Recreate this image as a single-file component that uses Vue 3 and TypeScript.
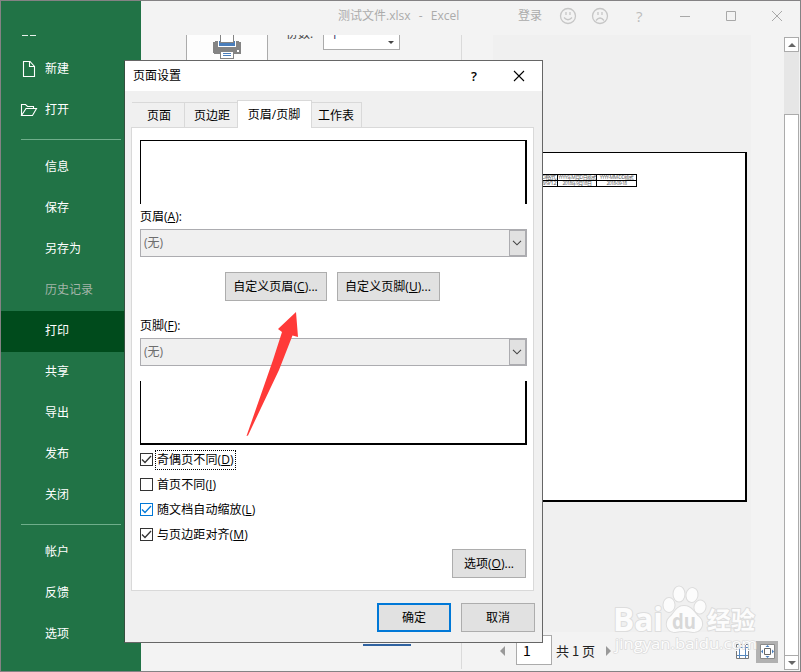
<script setup lang="ts">
import { ref } from 'vue'

interface NavItem { label: string; icon?: 'file' | 'folder'; active?: boolean; disabled?: boolean }
interface Option { label: string; key: string; checked: boolean; hot?: boolean; focus?: boolean }

const navGroups: NavItem[][] = [
  [{ label: '新建', icon: 'file' }, { label: '打开', icon: 'folder' }],
  [
    { label: '信息' },
    { label: '保存' },
    { label: '另存为' },
    { label: '历史记录', disabled: true },
    { label: '打印', active: true },
    { label: '共享' },
    { label: '导出' },
    { label: '发布' },
    { label: '关闭' },
  ],
  [{ label: '帐户' }, { label: '反馈' }, { label: '选项' }],
]

const tabs = ['页面', '页边距', '页眉/页脚', '工作表']
const activeTab = ref(2)

const options = ref<Option[]>([
  { label: '奇偶页不同', key: 'D', checked: true, focus: true },
  { label: '首页不同', key: 'I', checked: false },
  { label: '随文档自动缩放', key: 'L', checked: true, hot: true },
  { label: '与页边距对齐', key: 'M', checked: true },
])
</script>

<template>
  <div class="window">
    <nav class="sidebar">
      <div class="back"><i></i><i></i></div>
      <div v-for="(group, g) in navGroups" :key="g" class="group">
        <div
          v-for="item in group"
          :key="item.label"
          class="nav-item"
          :class="{ active: item.active, disabled: item.disabled }"
        >
          <span class="nav-icon">
            <svg v-if="item.icon === 'file'" width="18" height="18" viewBox="0 0 18 18">
              <path d="M3.500 1.500H10L14.500 6.500V16.500H3.500ZM9.500 1.500V6.500H14.500" />
            </svg>
            <svg v-else-if="item.icon === 'folder'" width="18" height="18" viewBox="0 0 18 18">
              <path d="M1.500 14V3.500H5.500L7.500 5.500H13.500V7M1.500 14.500L6 7.500H16.500L12.500 14.500Z" />
            </svg>
          </span>
          <span>{{ item.label }}</span>
        </div>
      </div>
    </nav>

    <main class="main">
      <header class="titlebar">
        <span class="doc-title">测试文件.xlsx&nbsp; -&nbsp; Excel</span>
        <span class="login">登录</span>
        <svg class="title-icons" width="240" height="20" viewBox="0 0 240 20">
          <g fill="none" stroke="#c6c6c6" stroke-width="1.3">
            <circle cx="18" cy="10" r="7.500" />
            <path d="M14 11.500Q18 16 22 11.500M16 6V9M20 6V9" />
            <circle cx="50" cy="10" r="7.500" />
            <path d="M46 14.500Q50 9.500 54 14.500M48 6V9M52 6V9" />
          </g>
          <g fill="none" stroke="#a8a8a8">
            <path d="M130 10.500H140M176.500 5.500H185.500V14.500H176.500Z" />
            <path d="M222 5L232 15M232 5L222 15" />
          </g>
          <text x="86" y="15.500" font-size="15" fill="#bcbcbc">?</text>
        </svg>
      </header>

      <div class="body">
        <section class="settings">
          <div class="print-row">
            <div class="print-button">
              <svg width="28" height="25" viewBox="0 0 28 25" shape-rendering="crispEdges">
                <path d="M0 7H5V12H23V7H28V18L27 19H1L0 18Z" fill="#848484" />
                <path d="M2 6H5V12H2ZM23 6H26V12H23Z" fill="#848484" />
                <path d="M5 6H23V12H5Z" fill="#fff" />
                <path d="M6 6H22V11H6Z" fill="#4a7ebb" />
                <path d="M7 0V8H21V0" fill="#848484" />
                <path d="M8 0H20V7H8Z" fill="#fff" />
                <path d="M7 16H21V24H7Z" fill="#848484" />
                <path d="M8 17H20V23H8Z" fill="#fff" />
                <path d="M10 18H18V19H10ZM10 20H18V21H10Z" fill="#4a7ebb" />
                <path d="M24 15H26V17H24Z" fill="#fff" />
              </svg>
            </div>
            <div class="copies-label"><span>份数:</span></div>
            <div class="copies-box"><b>1</b><i class="caret"></i></div>
          </div>
          <a class="setup-link">页面设置</a>
        </section>

        <section class="preview">
          <div class="canvas">
            <div class="paper">
              <table class="sheet">
                <tbody>
                  <tr><td class="c1"><span>YYYY/M/D格式</span></td><td class="c2"><span>YYYY年M月D日格式</span></td><td class="c3"><span>YYYY-MM-DD格式</span></td></tr>
                  <tr><td class="c1"><span>2018/9/12</span></td><td class="c2"><span>2018年9月18日</span></td><td class="c3"><span>2018-09-18</span></td></tr>
                </tbody>
              </table>
            </div>
          </div>
          <footer class="pager">
            <i class="tri left"></i>
            <span class="page-box">1</span>
            <span class="page-total">共 1 页</span>
            <i class="tri right"></i>
            <svg class="margins" width="13" height="15" viewBox="0 0 13 15">
              <path d="M.5 .5H12.500V14.500H.5Z" fill="#fff" stroke="#777" />
              <path d="M3.500 1V14M9.500 1V14M1 3.500H12M1 11.500H12" stroke="#5587bd" />
              <path d="M3 .5H4M6 .5H7M9 .5H10M.5 6V7M12.500 6V7" stroke="#fff" />
            </svg>
            <span class="zoom">
              <svg width="15" height="15" viewBox="0 0 15 15">
                <path d="M.5 .5H14.500V14.500H.5Z" fill="#fff" stroke="#8a8a8a" />
                <path d="M4.500 4.500H10.500V10.500H4.500Z" fill="none" stroke="#666" />
                <path d="M7.500 1L9.500 3H5.500ZM7.500 14L9.500 12H5.500ZM1 7.500L3 5.500V9.500ZM14 7.500L12 5.500V9.500Z" fill="#4a7ebb" />
              </svg>
            </span>
          </footer>
        </section>

        <div class="scrollbar">
          <div class="sb-btn"><i class="up"></i></div>
          <div class="track"></div>
          <div class="thumb"></div>
          <div class="sb-btn"><i class="down"></i></div>
        </div>
      </div>
    </main>

    <div class="dialog">
      <div class="dlg-title">
        <span>页面设置</span>
        <b class="help">?</b>
        <svg width="12" height="12" viewBox="0 0 12 12"><path d="M1 1L11 11M11 1L1 11" stroke="#000" stroke-width="1.100" /></svg>
      </div>
      <div class="tabs">
        <div v-for="(t, i) in tabs" :key="t" class="tab" :class="['t' + i, { on: i === activeTab }]" @click="activeTab = i">{{ t }}</div>
      </div>
      <div class="panel">
        <div class="box head"></div>
        <div class="label">页眉(<u>A</u>):</div>
        <div class="select"><span>(无)</span><i><svg width="10" height="6" viewBox="0 0 10 6"><path d="M1 .8L5 4.800L9 .8" /></svg></i></div>
        <div class="customs">
          <button class="btn c">自定义页眉(<u>C</u>)...</button>
          <button class="btn d">自定义页脚(<u>U</u>)...</button>
        </div>
        <div class="label">页脚(<u>F</u>):</div>
        <div class="select"><span>(无)</span><i><svg width="10" height="6" viewBox="0 0 10 6"><path d="M1 .8L5 4.800L9 .8" /></svg></i></div>
        <div class="box foot"></div>
        <div class="checks">
          <div v-for="o in options" :key="o.key" class="check" :class="{ hot: o.hot }" @click="o.checked = !o.checked">
            <span class="tick"><svg v-if="o.checked" width="11" height="11" viewBox="0 0 11 11"><path d="M1 5.500L4 8.500L10 2" /></svg></span>
            <span class="check-text" :class="{ focus: o.focus }">{{ o.label }}(<u>{{ o.key }}</u>)</span>
          </div>
        </div>
        <div class="opt-row"><button class="btn">选项(<u>O</u>)...</button></div>
      </div>
      <div class="actions">
        <button class="btn primary">确定</button>
        <button class="btn">取消</button>
      </div>
    </div>

    <svg class="arrow" width="54" height="126" viewBox="0 0 54 126">
      <path d="M51 0L53 25L47.500 23.500L34 58L3 123.500L1.500 124L28 48L37 20L33 17Z" fill="#ff3a38" />
    </svg>

    <svg class="watermark" width="146" height="76" viewBox="0 0 146 76">
      <g fill="#fff" stroke="#dadada" stroke-width="2" paint-order="stroke" stroke-linejoin="round">
        <ellipse cx="55" cy="24" rx="5.500" ry="7" />
        <ellipse cx="65" cy="13" rx="5.500" ry="7.500" />
        <ellipse cx="78" cy="14" rx="5.500" ry="7" transform="rotate(12 78 14)" />
        <ellipse cx="86" cy="26" rx="5.500" ry="6.500" transform="rotate(15 86 26)" />
        <path d="M70 25C62 25 61 32 56 36C50 42 53 51 61 51Q70 49 79 51C88 51 91 42 85 36C80 32 78 25 70 25Z" />
        <text x="-1" y="50" class="wm-bai" textLength="50" lengthAdjust="spacingAndGlyphs">Bai</text>
        <text x="93" y="47.500" class="wm-cn" textLength="48">经验</text>
        <text x="1" y="68" class="wm-url" textLength="142" lengthAdjust="spacingAndGlyphs">jingyan.baidu.com</text>
      </g>
      <text x="58" y="48" class="wm-du" textLength="24" lengthAdjust="spacingAndGlyphs">du</text>
    </svg>
  </div>
</template>

<style>
body { margin: 0; overflow: hidden; }
</style>

<style scoped>
* { box-sizing: border-box; }
.window {
  position: relative; display: flex; width: 801px; height: 672px;
  border: 1px solid #848284; background: #f3f3f3; overflow: hidden;
  font: 12px/16px "Open Sans", "Noto Sans CJK SC", sans-serif; color: #000;
}
i { font-style: normal; }

.sidebar { width: 140px; flex: none; background: #217346; color: #fff; }
.back { display: flex; gap: 2px; height: 48px; padding: 34px 0 0 21px; }
.back i { width: 6px; height: 1px; background: #e8f1ec; }
.group + .group::before { content: ""; display: block; height: 1px; margin: 8px 20px 7px; width: 100px; background: #6fae8b; }
.nav-item { display: flex; align-items: center; height: 41px; padding-bottom: 1px; }
.nav-icon { width: 44px; flex: none; padding-left: 19px; }
.nav-icon svg { display: block; fill: none; stroke: #fff; stroke-width: 1.100; }
.active { background: #004b1c; }
.disabled { color: #a3b5a9; }

.main { flex: 1; display: flex; flex-direction: column; }
.titlebar { display: flex; height: 34px; flex: none; align-items: flex-start; padding-top: 7px; color: #ababab; }
.doc-title { margin-left: 197px; width: 180px; white-space: nowrap; word-spacing: 1px; }
.login { width: 32px; }
.title-icons { margin-top: -2px; font-family: "Open Sans", sans-serif; }
.body { flex: 1; display: flex; min-height: 0; }
.settings { width: 321px; flex: none; margin-bottom: 2px; border-right: 1px solid #dadada; overflow: hidden; padding-left: 45px; }
.print-row { display: flex; height: 595px; align-items: flex-start; }
.print-button { width: 82px; height: 80px; background: #fdfdfd; border: solid #ababab; border-width: 0 1px; padding-left: 26px; }
.copies-label { margin-left: 18px; width: 37px; height: 6px; overflow: hidden; color: #444; }
.copies-label span { display: block; margin-top: -9px; }
.copies-box { width: 77px; height: 15px; background: #fff; border: 1px solid #ababab; border-top: 0; display: flex; justify-content: space-between; overflow: hidden; padding: 0 5px 0 7px; }
.copies-box b { font-weight: 400; margin-top: -8px; height: 15px; color: #336; }
.caret { width: 0; height: 0; margin-top: 6px; border: 3px solid transparent; border-top-color: #444; border-bottom: 0; }
.setup-link { display: block; width: 48px; margin-left: 177px; line-height: 14px; color: #2b579a; border-bottom: 2px solid #2f62a0; }

.preview { width: 322px; flex: none; display: flex; flex-direction: column; }
.canvas { width: 258px; height: 597px; margin-left: 31px; background: #f0f0f0; padding-top: 117px; }
.paper { height: 350px; width: 254px; background: #fff; border: 1px solid #000; border-width: 1px 2px 2px 1px; padding: 21px 0 0 1px; }
.sheet { border-collapse: collapse; table-layout: fixed; width: 142px; font-size: 6px; line-height: 5px; color: #555; }
.sheet td { border: 1px solid #000; padding: 0; height: 5px; text-align: center; overflow: hidden; white-space: nowrap; }
.sheet span { display: block; height: 5px; letter-spacing: -0.6px; }
.c1 { width: 62px; }
.sheet .c1 span { text-align: right; padding-right: 1px; }
.c2 { width: 39px; }
.c3 { width: 40px; }
.sheet .c2 span, .sheet .c3 span { font-size: 5px; }
.pager { display: flex; align-items: center; height: 39px; padding: 0 0 2px 38px; }
.tri { width: 0; height: 0; border: 5px solid transparent; }
.tri.left { border-right-color: #999; border-left: 0; }
.tri.right { border-left-color: #999; border-right: 0; margin-left: 11px; }
.page-box { width: 36px; height: 30px; margin: 0 0 1px 11px; padding: 7px 0 0 6px; background: #fff; border: 1px solid #ababab; font-family: "Noto Sans CJK SC", sans-serif; font-size: 14px; line-height: 14px; }
.page-total { margin-left: 4px; font: 13px/16px "Noto Sans CJK SC", sans-serif; color: #222; width: 39px; white-space: nowrap; }
.margins { margin-left: 125px; margin-top: 1px; }
.zoom { margin: 2px 0 0 7px; width: 22px; height: 22px; flex: none; background: #b1b1b1; display: flex; align-items: center; justify-content: center; }
.scrollbar { width: 15px; height: 633px; margin: 2px 0 0; display: flex; flex-direction: column; background: #e6e6e6; }
.sb-btn { height: 15px; flex: none; border: 1px solid #ababab; background: #fff; display: flex; align-items: center; justify-content: center; }
.sb-btn i { width: 0; height: 0; border: 4px solid transparent; }
.up { border-top: 0 !important; border-bottom-color: #666 !important; }
.down { border-bottom: 0 !important; border-top-color: #666 !important; }
.track { height: 62px; flex: none; }
.thumb { flex: 1; background: #fff; border: 1px solid #ababab; border-bottom: 0; }

.dialog {
  position: absolute; left: 123px; top: 59px; width: 419px; height: 583px;
  border: 1px solid #666; border-left-color: #35503f; background: #f0f0f0;
}
.dlg-title { display: flex; align-items: center; height: 30px; background: #fff; padding-left: 8px; }
.dlg-title span { width: 338px; }
.help { width: 42px; font-size: 13px; font-weight: 600; }
.tabs { display: flex; align-items: flex-end; height: 36px; padding-left: 7px; }
.tab { height: 25px; border: 1px solid #d9d9d9; border-width: 1px 1px 0 0; line-height: 25px; text-align: center; }
.t0 { width: 53px; padding-left: 2px; }
.t1 { width: 52px; border-right: 0; padding-left: 2px; }
.t2 { width: 75px; padding-right: 1px; }
.t3 { width: 50px; padding-right: 1px; }
.tab.on { height: 28px; margin-bottom: -1px; background: #fff; border-left: 1px solid #d9d9d9; line-height: 27px; z-index: 1; }
.panel { width: 403px; height: 464px; margin-left: 6px; background: #fff; border: 1px solid #d9d9d9; padding: 12px 6px 0 8px; }
.box { width: 387px; height: 64px; border: 0 solid #000; }
.head { border-width: 1px 2px 0 1px; }
.foot { border-width: 0 2px 2px 1px; margin-top: 15px; }
.label { height: 25px; padding-top: 5px; }
.select { width: 387px; height: 28px; border: 1px solid #acacb0; background: #f0f0f0; display: flex; justify-content: space-between; align-items: center; color: #6d6d6d; padding-left: 3px; }
.select i { width: 17px; height: 26px; border: 1px solid #acacb0; background: #e1e1e1; display: flex; align-items: center; justify-content: center; padding-right: 1px; }
.select path { fill: none; stroke: #444; stroke-width: 1.100; }
.customs { display: flex; gap: 10px; padding: 15px 0 12px 85px; }
.btn { width: 74px; height: 29px; padding: 0; border: 1px solid #adadad; border-radius: 0; background: #e1e1e1; font: inherit; color: #000; white-space: nowrap; }
.btn.c, .btn.d { width: 102px; padding-right: 1px; letter-spacing: .05px; }
.btn.d { width: 103px; }
.btn.primary { border: 2px solid #0078d7; }
.checks { height: 102px; }
.check { display: flex; align-items: center; height: 25px; padding-top: 4px; padding-bottom: 0; }
.tick { width: 13px; height: 13px; flex: none; border: 1px solid #333; background: #fff; }
.tick svg { display: block; fill: none; stroke: #333; stroke-width: 1.300; }
.hot .tick { border-color: #0078d7; }
.hot svg { stroke: #0078d7; }
.check-text { margin-left: 2px; padding: 0 1px; border: 1px dotted transparent; height: 20px; line-height: 17px; white-space: nowrap; letter-spacing: .1px; }
.focus { border-color: #000; }
.opt-row { display: flex; justify-content: flex-end; padding: 2px 1px 0 0; }
.actions { display: flex; justify-content: flex-end; gap: 10px; padding: 12px 7px 0 0; }

.arrow { position: absolute; left: 244px; top: 311px; }
.watermark { position: absolute; left: 613px; top: 580px; opacity: .85; overflow: visible; }
.wm-bai, .wm-du { font-family: "Open Sans", sans-serif; font-weight: 700; }
.wm-bai { font-size: 33px; }
.wm-du { font-size: 21px; fill: #d4d4d4; }
.wm-cn { font: 700 24px "Noto Sans CJK SC", sans-serif; }
.wm-url { font: 15px "Open Sans", sans-serif; stroke-width: 1.500; }
</style>
